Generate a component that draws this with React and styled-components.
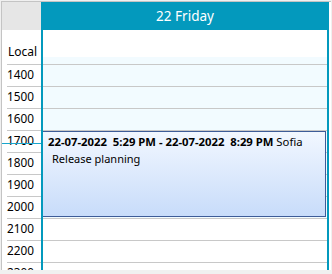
import React from "react";
import styled, { createGlobalStyle } from "styled-components";

const Global = createGlobalStyle`
  html, body { margin: 0; padding: 0; background: #ffffff; }
  * { box-sizing: border-box; }
`;

const Root = styled.div`
  width: 332px;
  height: 274px;
  background: #f0f0f0;
  padding: 1px 1px 4px 1px;
  font-family: "Noto Sans", "Open Sans", sans-serif;
`;

const Frame = styled.div`
  height: 100%;
  border-left: 1px solid #c4c4c4;
  border-top: 1px solid #c4c4c4;
  background: #ffffff;
  display: grid;
  grid-template-columns: 39px 288px;
  grid-template-rows: 28px 1fr;
  overflow: hidden;
`;

const Corner = styled.div`
  background: #e6e6e6;
`;

const DayHeader = styled.div`
  background: #0399bd;
  color: #ffffff;
  font-size: 13.5px;
  display: flex;
  align-items: center;
  justify-content: center;
  padding-bottom: 1px;
`;

const TimeColumn = styled.div`
  position: relative;
  overflow: hidden;
  background: #ffffff;
  padding-left: 5px;
`;

const LocalCell = styled.div`
  height: 35px;
  border-bottom: 1px solid #c8c8c8;
  font-size: 12px;
  color: #000;
  display: flex;
  align-items: flex-end;
  padding: 0 0 4px 1px;
  line-height: 16px;
`;

const HourLabel = styled.div`
  height: 22px;
  border-bottom: 1px solid #c8c8c8;
  font-size: 11.8px;
  line-height: 16px;
  padding: 1px 0 0 0;
  color: #000;
`;

const NowLine = styled.div`
  position: absolute;
  left: 0;
  right: 0;
  top: 113px;
  height: 1px;
  background: #1aa6cc;
`;

const DayColumn = styled.div`
  position: relative;
  overflow: hidden;
  border-left: 2px solid #0399bd;
  border-right: 2px solid #0399bd;
  display: flex;
  flex-direction: column;
`;

const AllDay = styled.div`
  height: 27px;
  flex: none;
  background: #ffffff;
`;

const Grid = styled.div`
  position: relative;
  flex: 1;
  overflow: hidden;
`;

const Rows = styled.div`
  margin-top: -14px;
`;

const Slot = styled.div`
  height: 22px;
  border-bottom: 1px solid #c8c8c8;
  background: ${(p) => (p.$work ? "#f2fbff" : "#ffffff")};
`;

const Event = styled.div`
  position: absolute;
  left: -1px;
  right: 1px;
  top: 74px;
  height: 86px;
  border: 1px solid #3d5c98;
  background: linear-gradient(to bottom, #f2f7ff 0%, #c8dcfa 100%);
  padding: 2px 4px 0 5px;
  font-size: 11.3px;
  line-height: 16px;
  color: #000;
`;

const EventTitle = styled.div`
  white-space: pre;
`;

const Bold = styled.span`
  font-weight: 700;
`;

const EventSubject = styled.div`
  padding-left: 4px;
  margin-top: 1px;
  font-size: 11px;
`;

const hours = ["1400", "1500", "1600", "1700", "1800", "1900", "2000", "2100", "2200", "2300"];
const slots = [
  { h: 13, work: true },
  { h: 14, work: true },
  { h: 15, work: true },
  { h: 16, work: true },
  { h: 17, work: true },
  { h: 18, work: true },
  { h: 19, work: true },
  { h: 20, work: true },
  { h: 21, work: false },
  { h: 22, work: false },
  { h: 23, work: false },
];

export default function App() {
  return (
    <>
      <Global />
      <Root>
        <Frame>
          <Corner />
          <DayHeader>22 Friday</DayHeader>
          <TimeColumn>
            <LocalCell>Local</LocalCell>
            {hours.map((h) => (
              <HourLabel key={h}>{h}</HourLabel>
            ))}
            <NowLine />
          </TimeColumn>
          <DayColumn>
            <AllDay />
            <Grid>
              <Rows>
                {slots.map((s) => (
                  <Slot key={s.h} $work={s.work} />
                ))}
              </Rows>
              <Event>
                <EventTitle>
                  <Bold>{"22-07-2022  5:29 PM - 22-07-2022  8:29 PM"}</Bold>{" Sofia"}
                </EventTitle>
                <EventSubject>Release planning</EventSubject>
              </Event>
            </Grid>
          </DayColumn>
        </Frame>
      </Root>
    </>
  );
}
